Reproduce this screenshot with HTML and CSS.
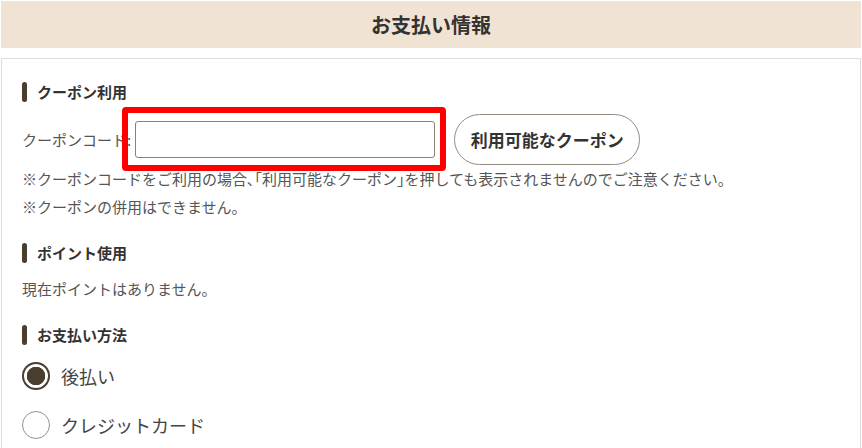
FILE: index.html
```html
<!DOCTYPE html>
<html lang="ja">
<head>
    <meta charset="UTF-8">
    <meta name="viewport" content="width=device-width, initial-scale=1.0">
    <title>お支払い情報</title>
    <link rel="stylesheet" href="styles.css">
</head>
<body>
    <header class="page-header">
        <h1>お支払い情報</h1>
    </header>
    <div class="panel">
        <h2 class="section-title">クーポン利用</h2>
        <div class="coupon-row">
            <label for="coupon-code">クーポンコード:</label>
            <div class="input-wrap">
                <input type="text" id="coupon-code">
                <span class="highlight"></span>
            </div>
            <button type="button" class="coupon-btn">利用可能なクーポン</button>
        </div>
        <p class="note">※クーポンコードをご利用の場合､｢利用可能なクーポン｣を押しても表示されませんのでご注意ください。</p>
        <p class="note">※クーポンの併用はできません。</p>

        <h2 class="section-title">ポイント使用</h2>
        <p class="note">現在ポイントはありません。</p>

        <h2 class="section-title">お支払い方法</h2>
        <div class="options">
            <label class="option">
                <input type="radio" name="pay" checked>
                <span>後払い</span>
            </label>
            <label class="option">
                <input type="radio" name="pay">
                <span>クレジットカード</span>
            </label>
        </div>
    </div>
</body>
</html>
```

FILE: styles.css
```css
body {
    font-family: "Noto Sans CJK JP", "Noto Sans", sans-serif;
    margin: 0;
    padding: 1px;
    background: #fff;
    color: #444;
    font-size: 15px;
}
.page-header {
    background-color: #f1e3d4;
    height: 47px;
    display: flex;
    align-items: center;
    justify-content: center;
}
.page-header h1 {
    margin: 0;
    font-size: 20px;
    font-weight: bold;
    color: #333;
}
.panel {
    margin-top: 10px;
    border: 1px solid #dcdcdc;
    border-bottom: none;
    padding: 23px 20px 20px;
}
.section-title {
    display: flex;
    align-items: center;
    gap: 10px;
    margin: 22px 0 12px;
    font-size: 15px;
    font-weight: bold;
    color: #333;
    line-height: 20px;
}
.section-title:first-child {
    margin-top: 0;
}
.section-title::before {
    content: "";
    width: 5px;
    height: 20px;
    border-radius: 3px;
    background: #4a3e2e;
}
.coupon-row {
    display: flex;
    align-items: center;
    height: 51px;
}
.coupon-row label {
    color: #555;
}
.input-wrap {
    position: relative;
    margin-left: 4px;
}
.input-wrap input {
    display: block;
    width: 300px;
    height: 37px;
    box-sizing: border-box;
    border: 1px solid #8c8074;
    border-radius: 3px;
    font-size: 14px;
}
.highlight {
    position: absolute;
    left: -13px;
    top: -14px;
    right: -11px;
    bottom: -13px;
    border: 6px solid #ff0000;
    border-radius: 4px;
    pointer-events: none;
}
.coupon-btn {
    margin-left: 19px;
    height: 51px;
    width: 186px;
    border: 1px solid #968b80;
    border-radius: 26px;
    background: #fff;
    font-family: inherit;
    font-size: 17px;
    font-weight: bold;
    color: #333;
    cursor: pointer;
}
.note {
    margin: 0;
    line-height: 28px;
    color: #555;
}
.options {
    margin-top: -6px;
}
.option {
    display: flex;
    align-items: center;
    gap: 11px;
    height: 49px;
    font-size: 18px;
    color: #444;
}
.option input {
    appearance: none;
    margin: 0;
    width: 28px;
    height: 28px;
    border: 1px solid #9a9088;
    border-radius: 50%;
    background: #fff;
}
.option input:checked {
    border: 2px solid #4a3e2e;
    background: radial-gradient(circle, #4a3e2e 0 9px, #fff 9.5px);
}
```
